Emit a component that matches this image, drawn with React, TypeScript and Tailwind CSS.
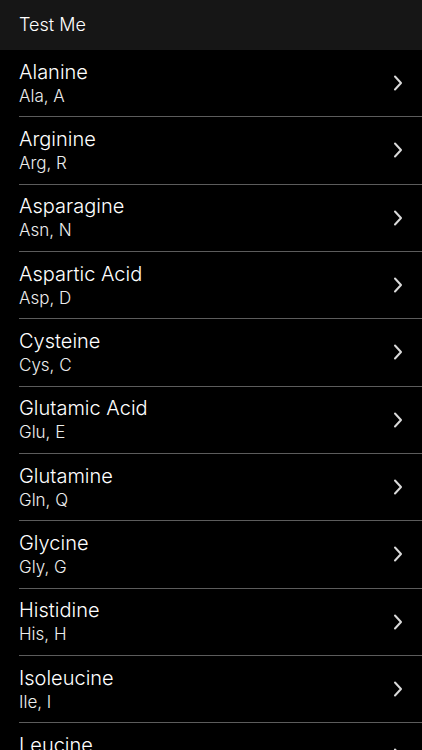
const ITEMS = [
  { name: 'Alanine', code: 'Ala, A' },
  { name: 'Arginine', code: 'Arg, R' },
  { name: 'Asparagine', code: 'Asn, N' },
  { name: 'Aspartic Acid', code: 'Asp, D' },
  { name: 'Cysteine', code: 'Cys, C' },
  { name: 'Glutamic Acid', code: 'Glu, E' },
  { name: 'Glutamine', code: 'Gln, Q' },
  { name: 'Glycine', code: 'Gly, G' },
  { name: 'Histidine', code: 'His, H' },
  { name: 'Isoleucine', code: 'Ile, I' },
  { name: 'Leucine', code: 'Leu, L' },
]

function Chevron() {
  return (
    <svg width="10" height="16" viewBox="0 0 10 16" fill="none">
      <path d="M2 1.5 L8 8 L2 14.5" stroke="#d9d9d9" strokeWidth="2" strokeLinecap="round" strokeLinejoin="round" />
    </svg>
  )
}

export default function App() {
  return (
    <div
      className="w-[422px] h-[750px] overflow-hidden bg-black text-white"
      style={{ fontFamily: 'Inter, "Noto Sans", sans-serif' }}
    >
      {/* Header */}
      <div className="h-[50px] bg-[#161616] flex items-center pl-[19px]">
        <span className="text-[18px] leading-none font-light">Test Me</span>
      </div>

      {/* List */}
      <div className="pl-[19px]">
        {ITEMS.map((it) => (
          <div
            key={it.name}
            className="h-[67.33px] border-b border-[#5c5c5c] flex items-center pr-[19px]"
          >
            <div className="flex-1 flex flex-col font-light">
              <span className="text-[20px] leading-[25px] text-white">{it.name}</span>
              <span className="text-[17px] leading-[22px] text-[#ededed]">{it.code}</span>
            </div>
            <Chevron />
          </div>
        ))}
      </div>
    </div>
  )
}
